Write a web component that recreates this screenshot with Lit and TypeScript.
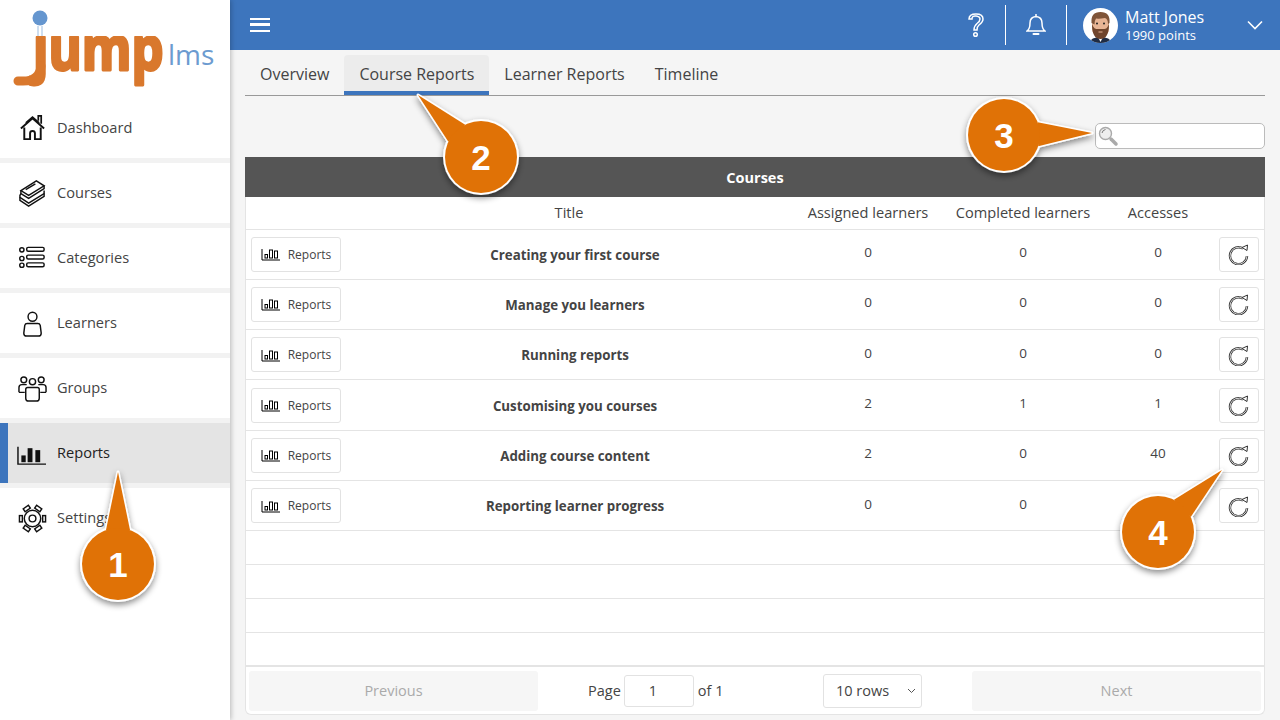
import { LitElement, html, css, svg } from 'lit'
import { customElement } from 'lit/decorators.js'

const icons = {
  home: svg`<path stroke-width="2" d="M3 15 15 4.500 27 15" /><path d="M8 9 15 3l7 6" /><path stroke-width="2" d="M6.500 14v12h6v-6q0-2.500 2.500-2.500t2.500 2.500v6h6V14" /><path stroke-width="1.800" d="M21 7V2h3v8" />`,
  books: svg`<path d="M3 12 19 2l8 5-16 10z" /><path d="M3 12v3l8 5 16-10V7" /><path d="M3 15l-1 2v2l9 6 16-10v-3" /><path d="M2 19v3l9 6 16-10v-3" /><path d="M8 11l10-6" />`,
  list: svg`<circle cx="4" cy="6" r="2.2" /><circle cx="4" cy="15" r="2.2" /><circle cx="4" cy="22" r="2.2" /><rect x="9" y="3.5" width="18" height="4" rx="1.5" /><rect x="9" y="11.5" width="18" height="4" rx="1.5" /><rect x="9" y="19.5" width="18" height="4" rx="1.5" />`,
  person: svg`<circle cx="15" cy="8" r="4.6" /><path d="M9.5 15h11q2 0 2.500 2l1 8q0 3-3 3H9q-3 0-3-3l1-8q.5-2 2.500-2z" />`,
  group: svg`<circle cx="6" cy="6" r="3" /><circle cx="15" cy="8" r="3.200" /><circle cx="24" cy="6" r="3" /><path d="M1 19v-5q0-3 3-3h5M29 19v-5q0-3-3-3h-5M1 19h6M29 19h-6" /><path d="M10 14h10q2 0 2 2v9q0 3-3 3h-8q-3 0-3-3v-9q0-2 2-2z" />`,
  bars: svg`<path d="M1 8v18h29" /><rect class="solid" x="4.500" y="17" width="4.500" height="7" /><rect class="solid" x="11" y="9.500" width="5" height="14.500" /><rect class="solid" x="19" y="11.500" width="5" height="12.500" />`,
  gear: svg`<circle cx="15" cy="15" r="3.500" /><circle cx="15" cy="15" r="8.500" /><rect x="1.500" y="12" width="3" height="6.500" /><rect x="25.500" y="12" width="3" height="6.500" /><rect x="6" y="3" width="6.500" height="3.500" transform="rotate(-35 9 5)" /><rect x="17.500" y="3" width="6.500" height="3.500" transform="rotate(35 21 5)" /><rect x="6" y="23.500" width="6.500" height="3.500" transform="rotate(35 9 25)" /><rect x="17.500" y="23.500" width="6.500" height="3.500" transform="rotate(-35 21 25)" />`,
}

const navItems = [
  { label: 'Dashboard', icon: icons.home },
  { label: 'Courses', icon: icons.books },
  { label: 'Categories', icon: icons.list },
  { label: 'Learners', icon: icons.person },
  { label: 'Groups', icon: icons.group },
  { label: 'Reports', icon: icons.bars, active: true },
  { label: 'Settings', icon: icons.gear },
]

const courses = [
  { title: 'Creating your first course', assigned: 0, completed: 0, accesses: 0 },
  { title: 'Manage you learners', assigned: 0, completed: 0, accesses: 0 },
  { title: 'Running reports', assigned: 0, completed: 0, accesses: 0 },
  { title: 'Customising you courses', assigned: 2, completed: 1, accesses: 1 },
  { title: 'Adding course content', assigned: 2, completed: 0, accesses: 40 },
  { title: 'Reporting learner progress', assigned: 0, completed: 0, accesses: 0 },
]

// number, circle centre, tip of the pointer
const callouts = [
  { n: 1, cx: 118, cy: 564, tx: 118, ty: 472 },
  { n: 2, cx: 481, cy: 157, tx: 418, ty: 95 },
  { n: 3, cx: 1004, cy: 135, tx: 1092, ty: 133 },
  { n: 4, cx: 1158, cy: 532, tx: 1222, ty: 470 },
]

function pointer(c: { cx: number; cy: number; tx: number; ty: number }) {
  const a = Math.atan2(c.ty - c.cy, c.tx - c.cx)
  const r = 36
  const s = 0.34
  const x1 = c.cx + r * Math.cos(a - s)
  const y1 = c.cy + r * Math.sin(a - s)
  const x2 = c.cx + r * Math.cos(a + s)
  const y2 = c.cy + r * Math.sin(a + s)
  return `${c.tx},${c.ty} ${x1},${y1} ${x2},${y2}`
}

@customElement('app-root')
export class AppRoot extends LitElement {
  static styles = css`
    :host {
      display: block;
      position: relative;
      width: 1280px;
      height: 720px;
      overflow: hidden;
      font-family: 'Open Sans', sans-serif;
      color: #444;
      background: #f5f5f5;
    }

    .app {
      display: flex;
      height: 720px;
    }

    /* sidebar */
    .sidebar {
      width: 230px;
      flex: none;
      background: #fff;
      box-shadow: 1px 0 5px rgba(0, 0, 0, 0.25);
      z-index: 1;
    }

    .logo {
      display: block;
      width: 230px;
      height: 98px;
    }

    .logo text {
      font-family: 'Open Sans', sans-serif;
    }

    .nav {
      display: flex;
      flex-direction: column;
      gap: 5px;
      background: #f2f2f2;
    }

    .nav-item {
      display: flex;
      align-items: center;
      gap: 10px;
      height: 60px;
      padding-left: 18px;
      background: #fff;
      font-size: 14.600px;
      color: #444;
    }

    .nav-item span {
      padding-bottom: 2px;
    }

    .nav-item.active {
      padding-left: 9px;
      border-left: 8px solid #3d75bd;
      background: #e4e4e4;
      color: #222;
      gap: 11px;
    }

    .nav-item svg {
      width: 29px;
      height: 29px;
      fill: none;
      stroke: #111;
      stroke-width: 1.5;
    }

    .nav-item svg .solid {
      fill: #111;
      stroke: none;
    }

    /* main */
    .main {
      flex: 1;
      min-width: 0;
      display: flex;
      flex-direction: column;
    }

    .topbar {
      display: flex;
      justify-content: flex-end;
      align-items: center;
      height: 50px;
      flex: none;
      background: #3d75bd;
      color: #fff;
    }

    .burger {
      margin: 0 auto 0 20px;
      width: 20px;
      height: 14px;
      border-top: 2.5px solid #fff;
      border-bottom: 2.5px solid #fff;
      box-sizing: border-box;
    }

    .burger i {
      display: block;
      height: 2.5px;
      margin-top: 3px;
      background: #fff;
    }

    .top-cell {
      display: flex;
      align-items: center;
      justify-content: center;
      height: 40px;
      width: 59px;
      border-right: 1px solid #fff;
    }

    .top-cell + .top-cell {
      width: 60px;
    }

    .top-cell svg {
      fill: none;
      stroke: #fff;
      stroke-width: 1.5;
    }

    .user {
      display: flex;
      align-items: center;
      gap: 7px;
      width: 197px;
      padding-left: 16px;
    }

    .avatar {
      width: 35px;
      height: 35px;
      flex: none;
    }

    .name {
      font-size: 16px;
      line-height: 19px;
    }

    .points {
      font-size: 13px;
      line-height: 16px;
    }

    .chevron {
      margin-left: auto;
      margin-right: 17px;
      fill: none;
      stroke: #fff;
      stroke-width: 1.6;
    }

    .content {
      flex: 1;
      display: flex;
      flex-direction: column;
      padding: 5px 15px 5px;
    }

    .tabs {
      display: flex;
      height: 41px;
      flex: none;
      box-sizing: border-box;
      border-bottom: 1px solid #999;
    }

    .tab {
      padding: 0 15px;
      height: 40px;
      box-sizing: border-box;
      line-height: 38px;
      font-size: 16px;
      color: #444;
    }

    .tab.active {
      background: #ececec;
      border-radius: 4px 4px 0 0;
      border-bottom: 4px solid #3d75bd;
    }

    .search-row {
      display: flex;
      justify-content: flex-end;
      height: 61px;
      flex: none;
      padding-top: 27px;
      box-sizing: border-box;
    }

    .search {
      display: flex;
      align-items: center;
      width: 170px;
      height: 26px;
      box-sizing: border-box;
      padding-left: 1px;
      background: #fff;
      border: 1px solid #bbb;
      border-radius: 5px;
    }

    .search svg {
      fill: #eee;
      stroke: #aaa;
      stroke-width: 1.4;
    }

    .search input {
      flex: 1;
      min-width: 0;
      border: none;
      outline: none;
      background: transparent;
    }

    /* table */
    .table {
      flex: 1;
      display: flex;
      flex-direction: column;
      background: #fff;
      border: 1px solid #e4e4e4;
      border-top: none;
      border-radius: 0 0 6px 6px;
    }

    .caption {
      height: 40px;
      flex: none;
      margin: 0 -1px;
      background: #555;
      color: #fff;
      font-size: 14.500px;
      font-weight: 700;
      line-height: 41px;
      text-align: center;
    }

    .row,
    .heads {
      display: grid;
      grid-template-columns: 100px 458px 128px 182px 88px 62px;
      align-items: center;
      box-sizing: border-box;
      border-bottom: 1px solid #e4e4e4;
      text-align: center;
    }

    .heads {
      grid-template-columns: 88px 470px 128px 182px 88px 62px;
      height: 32.500px;
      flex: none;
      padding-bottom: 2px;
      font-size: 14.600px;
      color: #444;
    }

    .row {
      height: 50.300px;
      flex: none;
      font-size: 13.500px;
      color: #444;
    }

    .course {
      padding-top: 1px;
      font-weight: 700;
      color: #444;
      font-size: 13.300px;
    }

    .num {
      padding-bottom: 4px;
    }

    .blank {
      height: 34px;
      flex: none;
      box-sizing: border-box;
      border-bottom: 1px solid #e4e4e4;
    }

    .blank.last {
      border-bottom-width: 2px;
    }

    .btn {
      display: flex;
      align-items: center;
      justify-content: center;
      box-sizing: border-box;
      height: 35px;
      background: #fff;
      border: 1px solid #e2e2e2;
      border-radius: 3px;
      font-size: 12px;
      color: #444;
    }

    .btn.report {
      width: 90px;
      margin-left: 5px;
      gap: 7px;
    }

    .btn.report svg {
      fill: none;
      stroke: #000;
      stroke-width: 1;
    }

    .btn.redo {
      width: 40px;
      margin-left: 17px;
    }

    .btn.redo svg {
      fill: none;
    }

    .pager {
      flex: 1;
      display: flex;
      align-items: center;
      padding: 0 3px;
      font-size: 14.500px;
      color: #444;
    }

    .pager-btn {
      display: flex;
      align-items: center;
      justify-content: center;
      width: 289px;
      height: 40px;
      flex: none;
      background: #f6f6f6;
      border-radius: 3px;
      color: #aaa;
    }

    .pager-mid {
      flex: 1;
      display: flex;
      align-items: center;
      padding-left: 50px;
    }

    .page-group {
      display: flex;
      align-items: center;
      gap: 4px;
      width: 235px;
    }

    .page-input {
      width: 70px;
      height: 32px;
      margin-left: -1px;
      box-sizing: border-box;
      border: 1px solid #e2e2e2;
      border-radius: 3px;
      text-align: center;
      font: 14.500px 'Open Sans', sans-serif;
      color: #444;
      padding: 0 12px 0 0;
    }

    .rows {
      appearance: none;
      width: 99px;
      height: 34px;
      box-sizing: border-box;
      border: 1px solid #e2e2e2;
      border-radius: 3px;
      background: #fff;
      font: 14.500px 'Open Sans', sans-serif;
      color: #444;
      padding-left: 12px;
    }

    .rows-arrow {
      margin-left: -15px;
      fill: none;
      stroke: #555;
      stroke-width: 1;
      pointer-events: none;
    }

    /* numbered callouts over the page */
    .callouts {
      position: absolute;
      left: 0;
      top: 0;
      z-index: 2;
      pointer-events: none;
    }

    .callouts text {
      font-family: 'Liberation Sans', sans-serif;
      font-size: 35px;
      font-weight: 700;
      fill: #fff;
      text-anchor: middle;
    }
  `

  render() {
    return html`
      <div class="app">
        <aside class="sidebar">
          ${this.renderLogo()}
          <nav class="nav">
            ${navItems.map(
              (item) => html`
                <div class="nav-item ${item.active ? 'active' : ''}">
                  <svg viewBox="0 0 30 30">${item.icon}</svg>
                  <span>${item.label}</span>
                </div>
              `
            )}
          </nav>
        </aside>
        <div class="main">
          ${this.renderTopbar()}
          <div class="content">
            <div class="tabs">
              <div class="tab">Overview</div>
              <div class="tab active">Course Reports</div>
              <div class="tab">Learner Reports</div>
              <div class="tab">Timeline</div>
            </div>
            <div class="search-row">
              <label class="search">
                <svg width="22" height="22" viewBox="0 0 22 22">
                  <path d="M14 14l5 5" stroke-width="3.500" stroke-linecap="round" />
                  <circle cx="8.500" cy="8.500" r="6" />
                  <path d="M5 8q.5-3 3.500-3.500" stroke="#777" stroke-width="1" fill="none" />
                </svg>
                <input type="text" />
              </label>
            </div>
            ${this.renderTable()}
          </div>
        </div>
      </div>
      ${this.renderCallouts()}
    `
  }

  renderLogo() {
    return html`
      <svg class="logo" viewBox="0 0 230 98">
        <defs>
          <clipPath id="no-dot"><rect x="0" y="36" width="230" height="62" /></clipPath>
        </defs>
        <path d="M38 26v10M42 26v10" stroke="#9dbde0" stroke-width="1" fill="none" />
        <circle cx="40" cy="18" r="7.500" fill="#6596cf" />
        <g clip-path="url(#no-dot)">
          <text transform="translate(33 70) scale(.83 1)" font-size="61" font-weight="700" fill="#d9782d"
            stroke="#d9782d" stroke-width="3" stroke-linejoin="round">jump</text>
        </g>
        <path d="M41 66q-1 15-18 15h-5" fill="none" stroke="#d9782d" stroke-width="9" stroke-linecap="round" />
        <text x="168" y="65" font-size="28" fill="#6c9bd0">lms</text>
      </svg>
    `
  }

  renderTopbar() {
    return html`
      <header class="topbar">
        <div class="burger"><i></i></div>
        <div class="top-cell">
          <svg width="18" height="26" viewBox="0 0 18 26">
            <path d="M2 7q0-5 7-5t7 5q0 3-4 6-2 1.500-2 5H7q0-4 3-6.500 3-2 3-4.500t-4-3-4 3z" />
            <circle cx="8.500" cy="22.500" r="1.800" />
          </svg>
        </div>
        <div class="top-cell">
          <svg width="20" height="24" viewBox="0 0 20 24">
            <path d="M1 18q3-2 3-8 0-6 6-6.500Q16 4 16 10q0 6 3 8z" />
            <path d="M10 1v2" />
            <path d="M7.500 21h5" stroke-width="2" stroke-linecap="round" />
          </svg>
        </div>
        <div class="user">
          <svg class="avatar" viewBox="0 0 35 35">
            <clipPath id="round"><circle cx="17.500" cy="17.500" r="17.500" /></clipPath>
            <g clip-path="url(#round)">
              <rect width="35" height="35" fill="#fff" />
              <path d="M6 35q2-6 11.500-6T29 35z" fill="#1f2c44" />
              <path d="M15 29h5l-2.500 5z" fill="#fff" />
              <rect x="9" y="8" width="17" height="20" rx="7" fill="#e8b595" />
              <path d="M8.500 15q-1-11 9-11T26.500 15l-1.500 1q0-5-3-6-6 1-9 .5-1.500 2-1.500 6z" fill="#7f5438" />
              <path d="M9 16q0 15 8.500 15T26 16l-1.500 3q-1 2-3 2h-8q-2 0-3-2z" fill="#70452c" />
              <circle cx="14" cy="15.500" r="1" fill="#222" />
              <circle cx="21" cy="15.500" r="1" fill="#222" />
              <path d="M15.500 24h4" stroke="#e8b595" stroke-width="1" />
            </g>
          </svg>
          <div>
            <div class="name">Matt Jones</div>
            <div class="points">1990 points</div>
          </div>
          <svg class="chevron" width="16" height="10" viewBox="0 0 16 10"><path d="M1 1.500l7 7 7-7" /></svg>
        </div>
      </header>
    `
  }

  renderTable() {
    return html`
      <div class="table">
        <div class="caption">Courses</div>
        <div class="heads">
          <span></span>
          <span>Title</span>
          <span>Assigned learners</span>
          <span>Completed learners</span>
          <span>Accesses</span>
          <span></span>
        </div>
        ${courses.map(
          (c) => html`
            <div class="row">
              <div class="btn report">
                <svg width="20" height="14" viewBox="0 0 20 14">
                  <path d="M1 2v11h18" />
                  <rect x="4" y="7.500" width="2.500" height="3.500" />
                  <rect x="8.500" y="3" width="3" height="8" />
                  <rect x="13.500" y="4" width="3" height="7" />
                </svg>
                Reports
              </div>
              <div class="course">${c.title}</div>
              <div class="num">${c.assigned}</div>
              <div class="num">${c.completed}</div>
              <div class="num">${c.accesses}</div>
              <div class="btn redo">
                <svg width="22" height="22" viewBox="0 0 22 22">
                  <path d="M15 5.500A8.500 8.500 0 1 0 19 13" stroke="#333" stroke-width="2.400" />
                  <path d="M15 5.500A8.500 8.500 0 1 0 19 13" stroke="#fff" stroke-width=".8" />
                  <path d="M14 4.500l5.500-2.500-.5 5.500z" fill="#fff" stroke="#333" stroke-width="1" />
                </svg>
              </div>
            </div>
          `
        )}
        ${[0, 1, 2, 3].map((i) => html`<div class="blank ${i === 3 ? 'last' : ''}"></div>`)}
        <div class="pager">
          <div class="pager-btn">Previous</div>
          <div class="pager-mid">
            <div class="page-group">
              <span>Page</span>
              <input class="page-input" value="1" />
              <span>of 1</span>
            </div>
            <select class="rows"><option>10 rows</option></select>
            <svg class="rows-arrow" width="9" height="6" viewBox="0 0 9 6"><path d="M1 1l3.500 3.500L8 1" /></svg>
          </div>
          <div class="pager-btn">Next</div>
        </div>
      </div>
    `
  }

  renderCallouts() {
    return html`
      <svg class="callouts" width="1280" height="720" viewBox="0 0 1280 720">
        <defs>
          <filter id="drop" x="-30%" y="-30%" width="160%" height="160%">
            <feDropShadow dx="0" dy="3" stdDeviation="3" flood-color="#000" flood-opacity="0.45" />
          </filter>
        </defs>
        ${callouts.map(
          (c) => svg`
            <g filter="url(#drop)">
              <polygon points=${pointer(c)} fill="#fff" stroke="#fff" stroke-width="3" stroke-linejoin="round" />
              <circle cx=${c.cx} cy=${c.cy} r="38" fill="#fff" />
            </g>
            <polygon points=${pointer(c)} fill="#e07206" />
            <circle cx=${c.cx} cy=${c.cy} r="36" fill="#e07206" />
            <text x=${c.cx} y=${c.cy + 12.5}>${c.n}</text>
          `
        )}
      </svg>
    `
  }
}
